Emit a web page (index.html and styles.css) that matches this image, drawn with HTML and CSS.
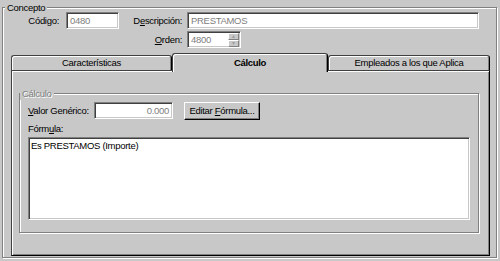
FILE: index.html
```html
<!DOCTYPE html>
<html lang="es">
<head>
  <meta charset="UTF-8">
  <title>Concepto</title>
  <link rel="stylesheet" href="styles.css">
</head>
<body>
  <div class="group concepto">
    <span class="legend">Concepto</span>
    <div class="row">
      <span class="lbl lbl-codigo">Código:</span>
      <div class="field field-codigo">0480</div>
      <span class="lbl lbl-desc">D<u>e</u>scripción:</span>
      <div class="field field-desc">PRESTAMOS</div>
    </div>
    <div class="row row-orden">
      <span class="lbl lbl-orden"><u>O</u>rden:</span>
      <div class="field field-orden">
        <span class="value">4800</span>
        <span class="spin">
          <span class="spin-btn">&#9652;</span>
          <span class="spin-btn">&#9662;</span>
        </span>
      </div>
    </div>

    <div class="tabs">
      <div class="tab-strip">
        <div class="tab tab-1">Características</div>
        <div class="tab tab-2 active">Cálculo</div>
        <div class="tab tab-3">Empleados a los que Aplica</div>
      </div>
      <div class="panel">
        <div class="group calc">
          <span class="legend disabled">Cálculo</span>
          <div class="row">
            <span class="lbl lbl-valor"><u>V</u>alor Genérico:</span>
            <div class="field field-valor">0.000</div>
            <div class="button">Editar <u>F</u>órmula...</div>
          </div>
          <div class="lbl lbl-formula">Fórm<u>u</u>la:</div>
          <div class="field memo">Es PRESTAMOS (Importe)</div>
        </div>
      </div>
    </div>
  </div>
</body>
</html>
```

FILE: styles.css
```css
body {
  margin: 0;
  width: 500px;
  height: 261px;
  overflow: hidden;
  background: #c8c8c8;
  color: #000;
  font-family: "Liberation Sans", Arial, sans-serif;
  font-size: 9.5px;
  letter-spacing: -0.3px;
}
u { text-decoration: underline; text-underline-offset: 1px; }

/* etched group boxes */
.group {
  position: relative;
  box-sizing: border-box;
  border: 1px solid #808080;
  box-shadow: inset 1px 1px #fff, 1px 1px #fff;
}
.legend {
  position: absolute;
  top: -7px;
  left: 2px;
  padding: 0 2px;
  line-height: 13px;
  background: #c8c8c8;
}
.legend.disabled { color: #808080; text-shadow: 1px 1px #fff; left: 0; }

.concepto {
  margin: 7px 3px 0 2px;
  height: 251px;
  padding-top: 4px;
}

.row { display: flex; align-items: center; height: 17px; }
.row-orden { margin-top: 2px; }
.lbl { white-space: nowrap; }
.lbl-codigo { width: 56px; text-align: right; margin-right: 7px; }
.lbl-desc { width: 63px; text-align: right; margin-right: 5px; }
.lbl-orden { width: 179px; text-align: right; margin-right: 5px; }

/* sunken edit boxes */
.field {
  box-sizing: border-box;
  height: 17px;
  padding: 0 3px;
  line-height: 15px;
  background: #fff;
  color: #808080;
  border: 1px solid;
  border-color: #808080 #fff #fff #808080;
  box-shadow: inset 1px 1px #404040, inset -1px -1px #c8c8c8;
  white-space: nowrap;
}
.field-codigo { width: 53px; }
.field-desc { width: 292px; }
.field-orden { width: 54px; display: flex; padding-right: 1px; }
.field-orden .value { flex: 1; }
.spin { display: flex; flex-direction: column; width: 11px; margin-top: 1px; }
.spin-btn {
  box-sizing: border-box;
  height: 7px;
  background: #c8c8c8;
  border: 1px solid;
  border-color: #fff #808080 #808080 #fff;
  color: #a0a0a0;
  font-size: 6px;
  line-height: 5px;
  text-align: center;
  overflow: hidden;
}

/* tabs */
.tabs { margin: 5px 6px 0 8px; }
.tab-strip {
  display: flex;
  align-items: flex-end;
  height: 17px;
  position: relative;
  z-index: 1;
}
.tab {
  box-sizing: border-box;
  height: 15px;
  line-height: 13px;
  text-align: center;
  background: #c8c8c8;
  border: 1px solid;
  border-color: #404040 #000 transparent #404040;
  border-bottom: none;
  border-radius: 3px 3px 0 0;
  box-shadow: inset 1px 1px #fff, inset -1px 0 #808080;
}
.tab-1 { width: 161px; }
.tab-2 { width: 156px; }
.tab-3 { width: 162px; }
.tab.active {
  height: 19px;
  margin-bottom: -2px;
  line-height: 17px;
  font-weight: bold;
  position: relative;
  z-index: 2;
}

.panel {
  box-sizing: border-box;
  height: 186px;
  border: 1px solid;
  border-color: #404040 #000 #000 #404040;
  box-shadow: inset 1px 1px #fff, inset -1px -1px #808080;
  padding: 22px 10px 0 7px;
}
.calc {
  height: 140px;
  padding: 8px 8px 0 8px;
}
.lbl-valor { width: 66px; }
.field-valor { width: 79px; text-align: right; }
.button {
  box-sizing: border-box;
  width: 76px;
  height: 18px;
  margin-left: 11px;
  margin-top: 1px;
  line-height: 15px;
  text-align: center;
  border: 1px solid;
  border-color: #fff #000 #000 #fff;
  box-shadow: inset -1px -1px #808080;
  white-space: nowrap;
}
.lbl-formula { margin-top: 3px; line-height: 14px; }
.memo {
  width: 442px;
  height: 83px;
  margin-top: 1px;
  padding: 2px;
  line-height: 12px;
  color: #000;
}
```
